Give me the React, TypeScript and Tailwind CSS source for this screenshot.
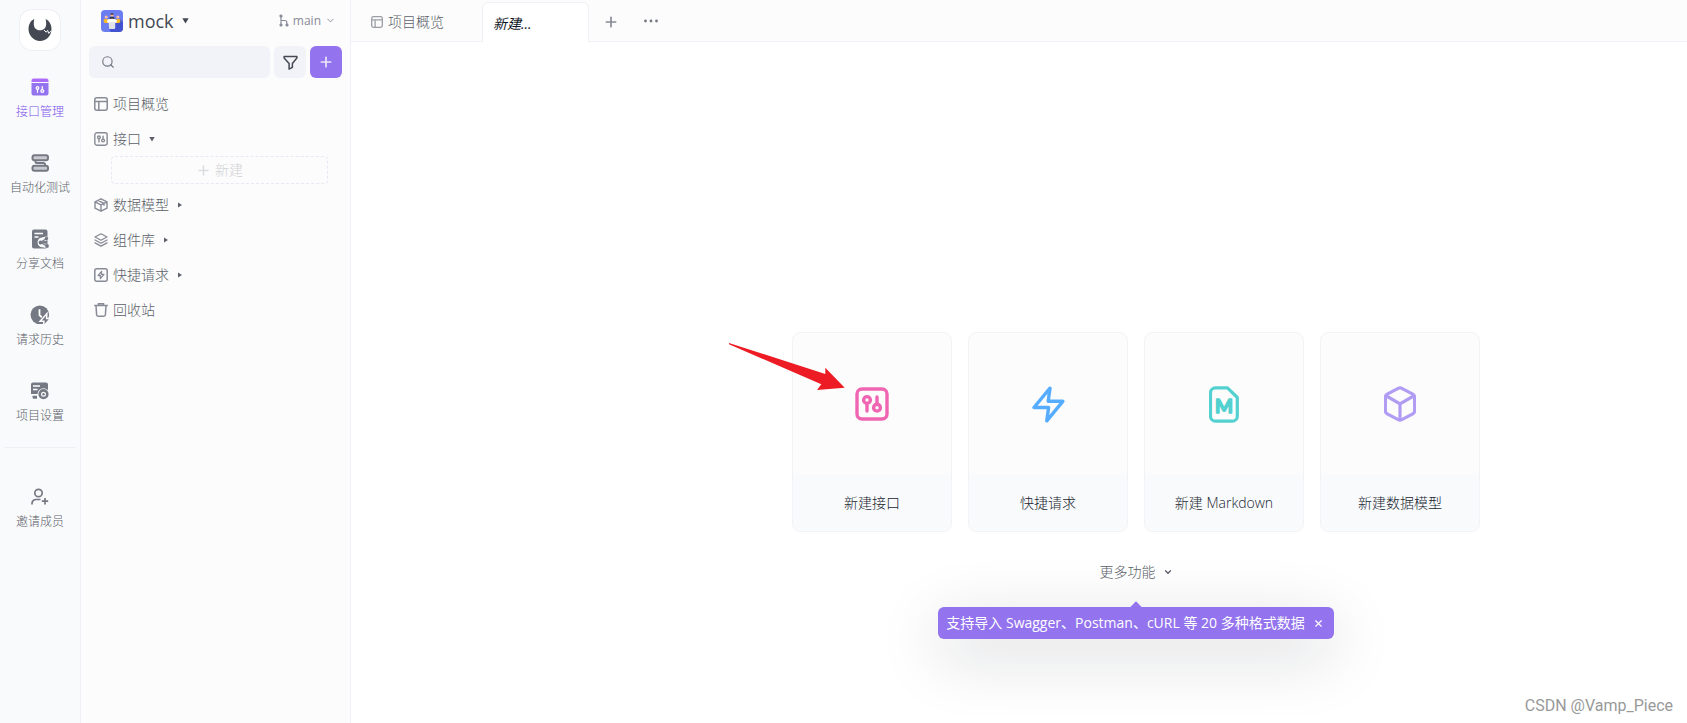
import { ReactNode } from "react";
import { ChevronDown, Plus, Search, X } from "lucide-react";

type IconProps = { className?: string };

function ApiIcon({ className }: IconProps) {
  return (
    <svg viewBox="0 0 34 34" className={className} fill="none" stroke="currentColor" strokeWidth="3.4" strokeLinecap="round" aria-hidden="true">
      <rect x="2" y="2" width="30" height="30" rx="5" />
      <circle cx="12" cy="13" r="3.4" />
      <path d="M12 16.5V24M22 10V17" />
      <circle cx="22" cy="20.7" r="3.4" />
    </svg>
  );
}

function BoltIcon({ className }: IconProps) {
  return (
    <svg viewBox="0 0 33 37" className={className} fill="none" stroke="currentColor" strokeWidth="3.4" strokeLinejoin="round" aria-hidden="true">
      <path d="M18 2.2 2 21.5h14.6l-1.8 13.3L30.8 15.3H16.2Z" />
    </svg>
  );
}

function MarkdownIcon({ className }: IconProps) {
  return (
    <svg viewBox="0 0 30 37" className={className} fill="none" stroke="currentColor" strokeWidth="3.2" strokeLinejoin="round" aria-hidden="true">
      <path d="M6.5 1.8h12L28.3 11.5v18.7a5 5 0 0 1-5 5H6.500a5 5 0 0 1-5-5V6.800a5 5 0 0 1 5-5Z" />
      <text x="15" y="27" textAnchor="middle" fontFamily="Lato" fontWeight="700" fontSize="19" fill="currentColor" strokeWidth="1.5">
        M
      </text>
    </svg>
  );
}

function CubeIcon({ className }: IconProps) {
  return (
    <svg viewBox="0 0 32 36" className={className} fill="none" stroke="currentColor" strokeWidth="3.2" strokeLinejoin="round" aria-hidden="true">
      <path d="M14.2 2.4a4 4 0 0 1 3.6 0l11 5.8a3.4 3.4 0 0 1 1.8 3v13.6a3.4 3.4 0 0 1-1.8 3l-11 5.8a4 4 0 0 1-3.6 0l-11-5.8a3.4 3.4 0 0 1-1.8-3V11.2a3.4 3.4 0 0 1 1.8-3Z" />
      <path d="M2.5 10 16 17.8 29.5 10M16 17.8V34" />
    </svg>
  );
}

function LayoutIcon({ className }: IconProps) {
  return (
    <svg viewBox="0 0 14 14" className={className} fill="none" stroke="currentColor" strokeWidth="1.5" aria-hidden="true">
      <rect x=".8" y=".8" width="12.4" height="12.4" rx="2" />
      <path d="M.8 4.6h12.4M4.8 4.6v8.6" />
    </svg>
  );
}

function SchemaIcon({ className }: IconProps) {
  return (
    <svg viewBox="0 0 14 14" className={className} fill="none" stroke="currentColor" strokeWidth="1.4" strokeLinejoin="round" aria-hidden="true">
      <path d="M7 .8 13 3.8v6.4l-6 3-6-3V3.8ZM1 3.8l6 3 6-3M7 6.8v6.4M4 2.3l6 3v2.5" />
    </svg>
  );
}

function LayersIcon({ className }: IconProps) {
  return (
    <svg viewBox="0 0 14 14" className={className} fill="none" stroke="currentColor" strokeWidth="1.3" strokeLinejoin="round" strokeLinecap="round" aria-hidden="true">
      <path d="M7 .8 13 4 7 7.2 1 4ZM1 7l6 3.2L13 7M1 9.9l6 3.2 6-3.2" />
    </svg>
  );
}

function QuickIcon({ className }: IconProps) {
  return (
    <svg viewBox="0 0 14 14" className={className} fill="none" stroke="currentColor" strokeWidth="1.5" strokeLinejoin="round" aria-hidden="true">
      <rect x=".8" y=".8" width="12.4" height="12.4" rx="2" />
      <path d="M7.6 3.3 4 7.6h2.5l-.2 3L10 6.4H7.4Z" strokeWidth="1.3" />
    </svg>
  );
}

function TrashIcon({ className }: IconProps) {
  return (
    <svg viewBox="0 0 14 14" className={className} fill="none" stroke="currentColor" strokeWidth="1.5" aria-hidden="true">
      <path d="M.2 2.6h13.6M4.5 2.2V.8h5v1.4M2 2.8l.6 9a1.5 1.5 0 0 0 1.5 1.4h5.8a1.5 1.5 0 0 0 1.5-1.4l.6-9" />
    </svg>
  );
}

function NavApiIcon() {
  return (
    <svg viewBox="0 0 18 18" className="size-[18px]" aria-hidden="true">
      <path d="M2.5.5h13a2 2 0 0 1 2 2V4H.5V2.5a2 2 0 0 1 2-2Z" fill="#ab6df7" />
      <path d="M.5 5h17v10.5a2 2 0 0 1-2 2h-13a2 2 0 0 1-2-2Z" fill="#9373ee" />
      <g fill="none" stroke="#fff" strokeWidth="1.3" strokeLinecap="round">
        <circle cx="6.5" cy="10" r="1.3" />
        <path d="M6.5 11.5V14.3M11.3 8.6v3" />
        <circle cx="11.3" cy="13" r="1.4" />
      </g>
    </svg>
  );
}

function NavTestIcon() {
  return (
    <svg viewBox="0 0 18 18" className="size-[18px]" fill="none" stroke="currentColor" strokeWidth="2" aria-hidden="true">
      <rect x="1.5" y="1.3" width="15.5" height="5" rx="2" fill="#c8cad0" />
      <rect x="1.5" y="11.7" width="15.5" height="5" rx="2" fill="#c8cad0" />
      <path d="M4.5 6.5v1A1.5 1.5 0 0 0 6 9h6.5A1.5 1.5 0 0 1 14 10.5v1" />
    </svg>
  );
}

function NavDocIcon() {
  return (
    <svg viewBox="0 0 18 20" className="h-5 w-[18px]" fill="none" aria-hidden="true">
      <path d="M3 .5h11.5a2 2 0 0 1 2 2v15a2 2 0 0 1-2 2H3a2 2 0 0 1-2-2v-15a2 2 0 0 1 2-2Z" fill="currentColor" />
      <path d="M3.5 4.5H12M3.5 8H7.5" stroke="#fff" strokeWidth="1.5" />
      <path d="M15.5 9.5 11 10.500a3 3 0 0 0-1 5.500l6 1" stroke="#f9fafc" strokeWidth="4" strokeLinecap="round" strokeLinejoin="round" />
      <path d="M15.5 9.500 9.500 13.500l6.500 3.500" stroke="currentColor" strokeWidth="1.3" />
      <circle cx="15.5" cy="9.5" r="1.7" fill="currentColor" />
      <circle cx="9.5" cy="13.5" r="1.9" fill="currentColor" />
      <circle cx="16" cy="17" r="1.9" fill="currentColor" />
    </svg>
  );
}

function NavHistoryIcon() {
  return (
    <svg viewBox="0 0 20 20" className="size-5" aria-hidden="true">
      <circle cx="9.8" cy="9.8" r="9.3" fill="currentColor" />
      <path d="M9.5 4.2v6l2.3 2" fill="none" stroke="#fff" strokeWidth="1.8" />
      <path d="m16 10.8-4.2 4.700h3l-.4 3.500 4.400-4.800h-3Z" fill="currentColor" stroke="#f9fafc" strokeWidth="3" />
      <path d="m16 10.800-4.200 4.700h3l-.4 3.500 4.400-4.800h-3Z" fill="currentColor" />
    </svg>
  );
}

function NavSettingsIcon() {
  return (
    <svg viewBox="0 0 20 18" className="h-[18px] w-5" fill="none" aria-hidden="true">
      <path d="M3 .5h13a2 2 0 0 1 2 2V12H1V2.5a2 2 0 0 1 2-2ZM2.5 13.8H7v3H4a1.5 1.5 0 0 1-1.5-1.5Z" fill="currentColor" />
      <path d="M3 4H10M3 7.5H7.5" stroke="#fff" strokeWidth="1.3" />
      <circle cx="13.5" cy="12.2" r="6" fill="#f9fafc" />
      <circle cx="13.5" cy="12.2" r="3.8" stroke="currentColor" strokeWidth="2.6" />
      <circle cx="13.5" cy="12.2" r="1.2" fill="currentColor" />
    </svg>
  );
}

function NavInviteIcon() {
  return (
    <svg viewBox="0 0 18 18" className="size-[18px]" fill="none" stroke="currentColor" strokeWidth="1.7" aria-hidden="true">
      <circle cx="7.5" cy="5" r="3.7" />
      <path d="M1 16.5v-1a4 4 0 0 1 4-4h4.5M14 10v6.5M10.8 13.2h6.4" />
    </svg>
  );
}

function LogoIcon() {
  return (
    <svg viewBox="0 0 24 24" className="size-6" aria-hidden="true">
      <path
        d="M6.2 1 3.8 2.6C2 4.5.5 7.5.5 10.8.5 17.5 5.5 23 12 23s11.5-5.3 11.5-12c0-3.3-1.3-6.3-3.5-8.400L17.600 1c.3 1.600.7 3.200.6 5-.1 3.800-2.300 6.300-6.200 6.300S5.900 9.800 5.800 6c0-1.800.1-3.400.4-5Z"
        fill="#434853"
      />
      <path d="m16 12 2.2 2.2 1.5-1.8 1 3 2.6-2.5" fill="none" stroke="#fff" strokeWidth="1" />
    </svg>
  );
}

function ProjectAvatar() {
  return (
    <svg viewBox="0 0 22 22" className="size-[22px] rounded" aria-hidden="true">
      <rect width="22" height="22" fill="#6c7df0" />
      <path d="m19 9 3 3v10H10l-3-5 7-8Z" fill="#4353cf" />
      <circle cx="5.2" cy="7" r="1.6" fill="#f9b9a2" />
      <circle cx="11" cy="5" r="1.7" fill="#f9b9a2" />
      <circle cx="16.8" cy="7" r="1.6" fill="#f9b9a2" />
      <path d="M9.3 4.8a1.7 1.7 0 0 1 3.4 0ZM8.5 9.5V8.2c0-2 5-2 5 0v1.3Z" fill="#343846" />
      <path d="M2.7 12v-2c0-1.5 4-1.5 4.3 0v3H4ZM15 13v-3c.3-1.5 4.3-1.5 4.3 0v2L18 13Z" fill="#fdbc1f" />
      <ellipse cx="11" cy="11" rx="5" ry="2.3" fill="#fff" />
      <path d="M7.8 12.3h6.4V18a1 1 0 0 1-1 1H8.8a1 1 0 0 1-1-1Z" fill="#dfe2e8" />
    </svg>
  );
}

function BranchIcon() {
  return (
    <svg viewBox="0 0 10 13" className="h-[13px] w-[10px]" fill="none" stroke="currentColor" strokeWidth="1.2" aria-hidden="true">
      <path d="M2 2v9M2 6.5h3.8a2 2 0 0 1 2 2V11" />
      <circle cx="2" cy="2" r="1" fill="currentColor" />
      <circle cx="2" cy="11" r="1" fill="currentColor" />
      <circle cx="8" cy="11" r="1" fill="currentColor" />
    </svg>
  );
}

function FilterIcon() {
  return (
    <svg viewBox="0 0 16 16" className="size-[15px]" fill="none" stroke="currentColor" strokeWidth="1.6" strokeLinejoin="round" aria-hidden="true">
      <path d="M1.2 1.5h13.6v1.8L10 9v4.2L6.5 15V9L1.2 3.3Z" />
    </svg>
  );
}

function Caret({ open, className }: { open?: boolean; className?: string }) {
  return (
    <svg viewBox="0 0 6 6" className={className} fill="currentColor" aria-hidden="true">
      <path d={open ? "M.3 1h5.400L3 5.500Z" : "M1 .5v5L5 3Z"} />
    </svg>
  );
}

const navItems: { label: string; icon: ReactNode; active?: boolean }[] = [
  { label: "接口管理", icon: <NavApiIcon />, active: true },
  { label: "自动化测试", icon: <NavTestIcon /> },
  { label: "分享文档", icon: <NavDocIcon /> },
  { label: "请求历史", icon: <NavHistoryIcon /> },
  { label: "项目设置", icon: <NavSettingsIcon /> },
];

const cards = [
  { label: "新建接口", icon: <ApiIcon className="size-[34px] text-[#f065b2]" /> },
  { label: "快捷请求", icon: <BoltIcon className="h-[37px] w-[33px] text-[#56adff]" /> },
  { label: "新建 Markdown", icon: <MarkdownIcon className="h-[37px] w-[30px] text-[#52d1d0]" /> },
  { label: "新建数据模型", icon: <CubeIcon className="h-9 w-8 text-[#b19cf3]" /> },
];

function NavItem({ label, icon, active }: { label: string; icon: ReactNode; active?: boolean }) {
  return (
    <a href="#" className="flex h-[76px] flex-col items-center gap-[5px] pt-[10px] text-[#757983]">
      <span className="flex h-5 items-center">{icon}</span>
      <span className={`text-xs leading-5 font-light ${active ? "text-[#7a52ea]" : "text-[#5b5f69]"}`}>{label}</span>
    </a>
  );
}

function TreeRow({ label, icon, caret }: { label: string; icon: ReactNode; caret?: "open" | "closed" }) {
  return (
    <a href="#" className="flex h-[35px] items-center px-[13px] text-sm font-light text-[#5b5f69]">
      <span className="text-[#888b96]">{icon}</span>
      <span className="ml-[5px]">{label}</span>
      {caret ? <Caret open={caret === "open"} className="ml-2 size-[6px]" /> : null}
    </a>
  );
}

export default function App() {
  return (
    <div className="relative flex min-h-screen overflow-hidden bg-white font-['Open_Sans','Noto_Sans_CJK_SC',sans-serif]">
      <nav className="w-[81px] shrink-0 border-r border-[#f0f1f6] bg-[#f9fafc]">
        <div className="mx-auto mt-[10px] mb-[17px] flex size-10 items-center justify-center rounded-xl bg-white ring-1 ring-[#eff0f3]">
          <LogoIcon />
        </div>
        {navItems.map((item) => (
          <NavItem key={item.label} {...item} />
        ))}
        <hr className="mx-1 mb-[29px] border-[#eff0f5]" />
        <NavItem label="邀请成员" icon={<NavInviteIcon />} />
      </nav>

      <aside className="w-[270px] shrink-0 border-r border-[#f0f1f6] bg-[#fcfcfc]">
        <div className="flex h-[46px] items-center justify-between pr-[14px] pb-[5px] pl-5">
          <button type="button" className="flex items-center gap-[5px] text-lg text-[#434853]">
            <ProjectAvatar />
            mock
            <Caret open className="ml-[3px] size-[7px]" />
          </button>
          <button type="button" className="flex items-center text-xs text-[#888b96]">
            <BranchIcon />
            <span className="mr-1 ml-1">main</span>
            <ChevronDown className="size-[11px]" strokeWidth={2} />
          </button>
        </div>
        <div className="flex gap-1 px-2">
          <label className="flex h-8 min-w-0 flex-1 items-center rounded-md bg-[#f2f3f8] px-3">
            <Search className="size-[14px] shrink-0 text-[#757983]" />
            <input type="text" aria-label="搜索" className="min-w-0 flex-1 bg-transparent px-2 text-sm outline-none" />
          </label>
          <button type="button" aria-label="筛选" className="flex size-8 items-center justify-center rounded-md bg-[#f2f3f8] text-[#434853]">
            <FilterIcon />
          </button>
          <button type="button" aria-label="新建" className="flex size-8 items-center justify-center rounded-md bg-[#9373ee] text-[#ece6fc]">
            <Plus className="size-4" strokeWidth={2.5} />
          </button>
        </div>
        <div className="mt-2">
          <TreeRow label="项目概览" icon={<LayoutIcon className="size-[14px]" />} />
          <TreeRow label="接口" icon={<ApiIcon className="size-[14px]" />} caret="open" />
          <button type="button" className="mb-[3px] ml-[30px] flex h-7 w-[217px] items-center justify-center gap-1 rounded border border-dashed border-[#e8e8f5] text-sm font-light text-[#d0d1d5]">
            <Plus className="size-[15px] text-[#dcdde0]" strokeWidth={2.5} />
            新建
          </button>
          <TreeRow label="数据模型" icon={<SchemaIcon className="size-[14px]" />} caret="closed" />
          <TreeRow label="组件库" icon={<LayersIcon className="size-[14px]" />} caret="closed" />
          <TreeRow label="快捷请求" icon={<QuickIcon className="size-[14px]" />} caret="closed" />
          <TreeRow label="回收站" icon={<TrashIcon className="size-[14px]" />} />
        </div>
      </aside>

      <main className="min-w-0 flex-1">
        <div className="flex h-[42px] items-end border-b border-[#f0f1f6] bg-[#fcfcfc]">
          <button type="button" className="flex h-10 w-[131px] items-center gap-[5px] pt-[2px] pl-5 text-sm font-light text-[#5b5f69]">
            <LayoutIcon className="size-3 text-[#9a9da6]" />
            项目概览
          </button>
          <button type="button" className="-mb-px h-10 w-[107px] rounded-t-md border border-b-0 border-[#f0f1f6] bg-white px-[10px] pt-[2px] text-left text-sm text-[#101828] italic">
            新建...
          </button>
          <button type="button" aria-label="新建标签" className="flex h-10 w-11 items-center justify-center pt-[2px] text-[#888b96]">
            <Plus className="size-4" strokeWidth={2.5} />
          </button>
          <button type="button" aria-label="更多" className="flex h-10 w-9 items-center justify-center text-[#757983]">
            <svg viewBox="0 0 14 4" className="h-1 w-[14px]" fill="currentColor" aria-hidden="true">
              <circle cx="1.5" cy="2" r="1.4" />
              <circle cx="7" cy="2" r="1.4" />
              <circle cx="12.5" cy="2" r="1.4" />
            </svg>
          </button>
        </div>

        <div className="flex flex-col items-center pt-[290px] pl-[234px]">
          <div className="flex gap-4">
            {cards.map((card) => (
              <button
                key={card.label}
                type="button"
                className="flex h-[200px] w-40 flex-col overflow-hidden rounded-lg border border-[#f2f3f7] bg-[#fcfcfc] text-sm font-light text-[#202530]"
              >
                <span className="flex w-full flex-1 items-center justify-center">{card.icon}</span>
                <span className="flex h-14 w-full items-center justify-center bg-[#f9fafc]">{card.label}</span>
              </button>
            ))}
          </div>
          <button type="button" className="mt-[30px] flex h-5 items-center gap-[7px] text-sm font-light text-[#5b5f69]">
            更多功能
            <ChevronDown className="size-[10px]" strokeWidth={3} />
          </button>
          <div
            role="tooltip"
            className="relative mt-[25px] flex h-8 items-center gap-2 rounded-md bg-[#9373ee] pr-[10px] pl-2 text-sm text-white shadow-[0_16px_64px_rgba(16,24,40,0.18)]"
          >
            <span className="absolute -top-1 left-1/2 size-2 -translate-x-1/2 rotate-45 bg-[#9373ee]" />
            <span className="whitespace-nowrap">支持导入 Swagger、Postman、cURL 等 20 多种格式数据</span>
            <button type="button" aria-label="关闭">
              <X className="size-[11px]" strokeWidth={2.5} />
            </button>
          </div>
        </div>
      </main>

      {/* pointer to the first card */}
      <svg viewBox="0 0 118 50" className="pointer-events-none absolute top-[342px] left-[728px] h-[50px] w-[118px]" aria-hidden="true">
        <path d="M1 1v1.2L93.3 42.3 89 48l27.7-2.3L97.3 25.7V32Z" fill="#ed1c24" />
      </svg>
      <span className="absolute right-[14px] bottom-[5px] font-['Roboto',sans-serif] text-base text-[#999]">CSDN @Vamp_Piece</span>
    </div>
  );
}
